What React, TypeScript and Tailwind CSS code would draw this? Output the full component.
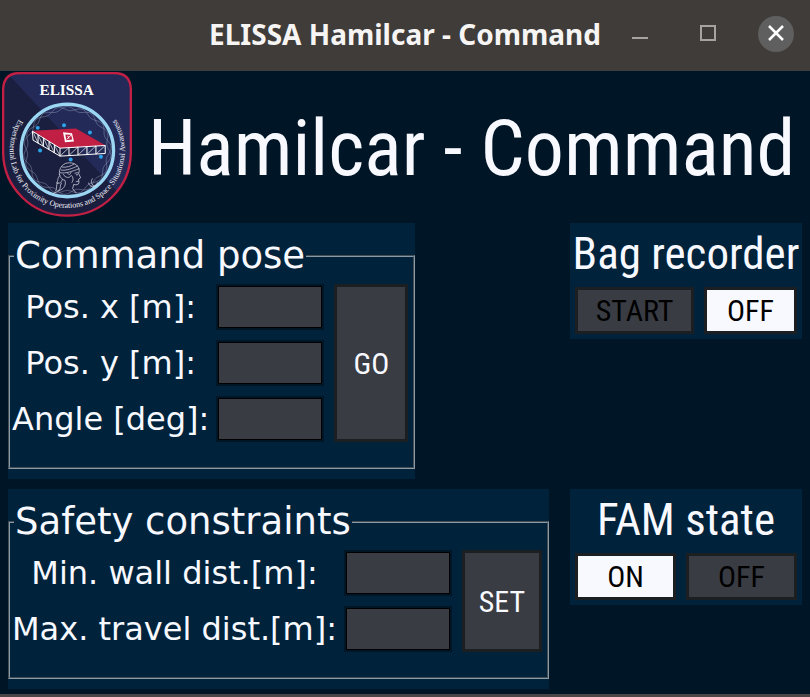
import type { ReactNode } from "react";

const CONDENSED = "font-['Roboto_Condensed','Roboto',sans-serif]";

/* Wavy rope that runs round the inside of the patch's ring. */
function ropePath(phase: number) {
  const steps = 240;
  const points: string[] = [];
  for (let i = 0; i <= steps; i++) {
    const a = (i / steps) * Math.PI * 2;
    const r = 126 + 6 * Math.sin(a * 11 + phase);
    points.push(`${(202 + r * Math.cos(a)).toFixed(1)} ${(254 + r * Math.sin(a)).toFixed(1)}`);
  }
  return `M${points.join("L")}Z`;
}

const DOTS = [
  [113, 186],
  [192, 178],
  [270, 200],
  [120, 254],
  [212, 281],
  [303, 273],
];

const SHIELD = "M9 72Q9 21 60 21H342Q393 21 393 72V258A192 192 0 0 1 9 258Z";

function Patch() {
  return (
    <svg viewBox="6 18 390 436" className="h-[145px] w-[130px] shrink-0" role="img" aria-label="ELISSA mission patch">
      <defs>
        <clipPath id="shield">
          <path d={SHIELD} />
        </clipPath>
        <path id="motto" d="M59.300 156.100A173 173 0 1 0 344.700 156.100" />
      </defs>
      <path d={SHIELD} fill="#232a58" />
      <path d="M0 10L18 18L372 400L200 460L0 400Z" fill="#1b1f3f" clipPath="url(#shield)" />
      <path d={SHIELD} fill="none" stroke="#c11f43" strokeWidth="7" />
      <text x="200" y="88" textAnchor="middle" fill="#fff" className="font-['Liberation_Serif',serif] text-[46px] font-bold">
        ELISSA
      </text>
      <text fill="#f1f2f8" className="font-['Liberation_Serif',serif] text-[24px]">
        <textPath href="#motto" startOffset="50%" textAnchor="middle">
          Experimental Lab for Proximity Operations and Space Situational Awareness
        </textPath>
      </text>
      <g fill="none" stroke="#8f98b4" strokeWidth="1.500">
        <path d={ropePath(0)} />
        <path d={ropePath(2.4)} />
      </g>
      <circle cx="202" cy="254" r="139" fill="none" stroke="#9bd7f3" strokeWidth="10" />

      <path d="M97 195L228 188L316 238L180 247Z" fill="#c11f43" />
      <g fill="none" stroke="#fff" strokeWidth="3">
        <path d="M97 196L99 223L180 271L316 263V239L180 247Z" />
        <path d="M180 247V271M207 245V269M234 243V268M261 242V266M288 240V265" />
        <path d="M114 207V232M130 216V241M147 227V251M163 237V261" />
      </g>
      <g fill="none" stroke="#fff" strokeWidth="2">
        <path d="M180 271L207 245M207 269L234 243M234 268L261 242M261 266L288 240M288 265L316 239" />
        <path d="M99 198L114 232M114 207L130 241M130 216L147 251M147 227L163 261M163 237L180 271" />
      </g>
      <path d="M189 199L216 202L222 227L195 229Z" fill="#fff" />
      <path d="M196 206L213 207L217 221L199 223Z" fill="#c11f43" />
      <path d="M200 221L213 208M203 210L207 218" fill="none" stroke="#fff" strokeWidth="3" />

      {DOTS.map(([x, y]) => (
        <circle key={`${x}-${y}`} cx={x} cy={y} r="6" fill="#2ca4ea" />
      ))}

      <g fill="none" stroke="#d5d8e4" strokeWidth="2.200" strokeLinecap="round" strokeLinejoin="round">
        <path d="M178 326C176 305 190 291 208 291C226 291 237 301 238 315L236 323L242 336L236 340L237 351C236 358 227 358 221 356L218 369L229 382" />
        <path d="M178 326C180 336 187 342 195 344C198 354 195 364 185 371L160 383" />
        <path d="M184 313C199 315 215 309 232 301M181 321C198 324 218 316 237 309M187 304C200 306 212 301 222 295" />
        <path d="M190 326C196 337 208 338 214 329C220 334 221 344 216 350M203 322C207 330 211 326 213 320" />
        <path d="M179 330C170 338 176 346 169 352C178 355 184 350 187 342M174 350C165 361 174 368 166 376M184 352C178 362 184 366 176 374" />
        <path d="M225 322L234 321M229 327H233M229 348L236 346" />
        <path d="M277 339C271 350 274 358 285 361M285 361C277 366 268 361 266 352M285 361L294 350" />
      </g>
    </svg>
  );
}

function TitleBar() {
  return (
    <header className="grid h-[71px] grid-cols-[1fr_auto_1fr] items-center bg-[#3f3c39] px-4 pb-1">
      <span />
      <span className="font-['Noto_Sans','Open_Sans',sans-serif] text-[28px] leading-9 font-bold text-[#f6f5f4]">
        ELISSA Hamilcar - Command
      </span>
      <div className="flex items-center justify-end gap-8">
        <button type="button" aria-label="Minimize" className="flex h-9 w-9 items-center justify-center">
          <svg viewBox="0 0 36 36" className="h-9 w-9" stroke="#a5a4a2" strokeWidth="2">
            <path d="M10 22H26" />
          </svg>
        </button>
        <button type="button" aria-label="Maximize" className="flex h-9 w-9 items-center justify-center">
          <svg viewBox="0 0 36 36" className="h-9 w-9" fill="none" stroke="#a5a4a2" strokeWidth="2">
            <rect x="11" y="10" width="14" height="14" />
          </svg>
        </button>
        <button type="button" aria-label="Close" className="flex h-9 w-9 items-center justify-center rounded-full bg-[#5f5f5f]">
          <svg viewBox="0 0 36 36" className="h-9 w-9" fill="none" stroke="#fff" strokeWidth="2.500">
            <path d="M11 10L25 24M25 10L11 24" />
          </svg>
        </button>
      </div>
    </header>
  );
}

function NumberField({ id, label }: { id: string; label: string }) {
  return (
    <>
      <label htmlFor={id} className="text-center whitespace-nowrap">
        {label}
      </label>
      <input
        id={id}
        type="text"
        className="h-[46px] w-[108px] border-2 border-[#001526] bg-[#393c43] px-2 text-[#f8f8ff] inset-ring inset-ring-black outline-none"
      />
    </>
  );
}

function FieldPanel({ title, action, actionWidth, children }: { title: string; action: string; actionWidth: string; children: ReactNode }) {
  return (
    <form className="justify-self-start bg-[#00233b] pt-[11px] pb-[10px]" onSubmit={(e) => e.preventDefault()}>
      <fieldset className="border-2 border-[#8a9ba8] pr-[5px] pb-[25px] pl-[2px] font-['DejaVu_Sans',sans-serif] [border-style:groove]">
        <legend className="ml-[2px] px-px text-[37px] leading-[44px]">{title}</legend>
        <div className="flex gap-[10px] pt-[6px]">
          <div className="grid grid-cols-[auto_auto] items-center gap-x-[7px] gap-y-[10px] text-[32px] leading-[46px]">{children}</div>
          <button type="submit" className={`${actionWidth} ${CONDENSED} border-3 border-[#1c1f21] bg-[#393c43] text-[30px]`}>
            {action}
          </button>
        </div>
      </fieldset>
    </form>
  );
}

function TogglePanel({ title, options }: { title: string; options: { name: string; active: boolean; width: string }[] }) {
  return (
    <section className={`self-start bg-[#00233b] p-[5px] ${CONDENSED}`}>
      <h2 className="-mx-1 pb-[7px] text-center text-[45px] leading-[52px] whitespace-nowrap">{title}</h2>
      <div className="flex justify-between gap-[10px]">
        {options.map((o) => (
          <button
            key={o.name}
            type="button"
            aria-pressed={o.active}
            className={`h-[47px] border-3 border-[#1c1f21] text-[30px] leading-[40px] text-black ${o.width} ${o.active ? "bg-[#f8f8ff]" : "bg-[#393c43]"}`}
          >
            {o.name}
          </button>
        ))}
      </div>
    </section>
  );
}

export default function App() {
  return (
    <div className="flex min-h-screen flex-col border-b-[3px] border-[#4a4547] bg-[#001526] text-[#f8f8ff]">
      <TitleBar />
      <div className="flex items-center gap-4 px-[2px] pt-px">
        <Patch />
        <h1 className={`flex-1 pt-2 text-[78px] leading-[100px] whitespace-nowrap ${CONDENSED}`}>Hamilcar - Command</h1>
      </div>
      <main className="grid grid-cols-[1fr_232px] gap-y-[10px] px-2 pt-[6px]">
        <FieldPanel title="Command pose" action="GO" actionWidth="w-[74px]">
          <NumberField id="pos-x" label="Pos. x [m]:" />
          <NumberField id="pos-y" label="Pos. y [m]:" />
          <NumberField id="angle" label="Angle [deg]:" />
        </FieldPanel>
        <TogglePanel
          title="Bag recorder"
          options={[
            { name: "START", active: false, width: "w-[119px]" },
            { name: "OFF", active: true, width: "w-[93px]" },
          ]}
        />
        <FieldPanel title="Safety constraints" action="SET" actionWidth="w-[80px]">
          <NumberField id="min-wall" label="Min. wall dist.[m]:" />
          <NumberField id="max-travel" label="Max. travel dist.[m]:" />
        </FieldPanel>
        <TogglePanel
          title="FAM state"
          options={[
            { name: "ON", active: true, width: "w-[101px]" },
            { name: "OFF", active: false, width: "w-[111px]" },
          ]}
        />
      </main>
    </div>
  );
}
